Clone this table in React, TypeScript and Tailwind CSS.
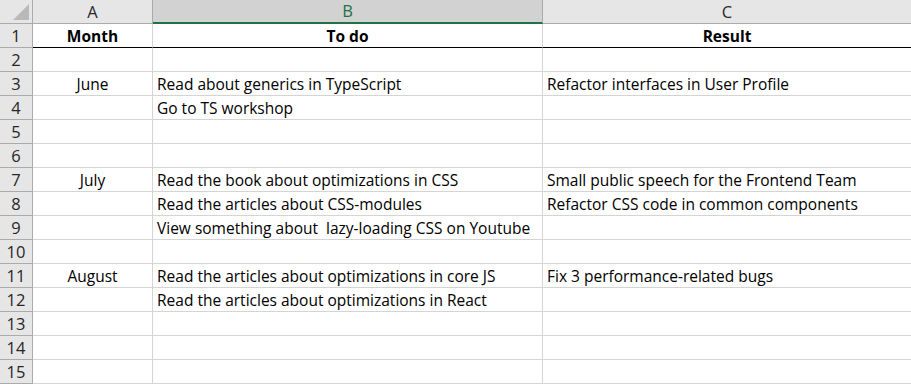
const rows: [string, string, string][] = [
  ['Month', 'To do', 'Result'],
  ['', '', ''],
  ['June', 'Read about generics in TypeScript', 'Refactor interfaces in User Profile'],
  ['', 'Go to TS workshop', ''],
  ['', '', ''],
  ['', '', ''],
  ['July', 'Read the book about optimizations in CSS', 'Small public speech for the Frontend Team'],
  ['', 'Read the articles about CSS-modules', 'Refactor CSS code in common components'],
  ['', 'View something about  lazy-loading CSS on Youtube', ''],
  ['', '', ''],
  ['August', 'Read the articles about optimizations in core JS', 'Fix 3 performance-related bugs'],
  ['', 'Read the articles about optimizations in React', ''],
  ['', '', ''],
  ['', '', ''],
  ['', '', ''],
];

const font = { fontFamily: '"Open Sans", "Liberation Sans", sans-serif' };

export default function App() {
  return (
    <div className="w-[911px] h-[384px] overflow-hidden bg-white text-[#000]" style={font}>
      <div className="grid grid-cols-[33px_120px_390px_1fr]">
        {/* column headers */}
        <div className="h-[24px] bg-[#e6e6e6] border-r border-b border-[#ababab] relative">
          <div className="absolute left-[13px] top-[4px] w-0 h-0 border-l-[16px] border-l-transparent border-b-[16px] border-b-[#b9b9b9]" />
        </div>
        <div className="h-[24px] pt-[1px] bg-[#e6e6e6] border-r border-b border-[#ababab] flex items-center justify-center text-[16.5px] text-[#262626]">
          A
        </div>
        <div className="h-[24px] pt-[1px] bg-[#d2d2d2] border-r border-[#ababab] border-b-2 border-b-[#217346] flex items-center justify-center text-[16.5px] text-[#217346]">
          B
        </div>
        <div className="h-[24px] pt-[1px] bg-[#e6e6e6] border-b border-[#ababab] flex items-center justify-center text-[16.5px] text-[#262626]">
          C
        </div>

        {rows.map((r, i) => {
          const first = i === 0;
          const cell = first
            ? 'h-[24px] pt-[2px] border-r border-[#d4d4d4] border-b border-b-black flex items-center justify-center font-bold text-[15.5px]'
            : 'h-[24px] pt-[2px] border-r border-b border-[#d4d4d4] flex items-center text-[15.5px] whitespace-nowrap overflow-hidden';
          return [
            <div
              key={`h${i}`}
              className="h-[24px] pt-[1px] bg-[#e6e6e6] border-r border-b border-[#ababab] flex items-center justify-center text-[16.5px] text-[#262626]"
            >
              {i + 1}
            </div>,
            <div key={`a${i}`} className={first ? cell : cell + ' justify-center'}>
              {r[0]}
            </div>,
            <div key={`b${i}`} className={first ? cell : cell + ' pl-[4px]'}>
              <span className="whitespace-pre">{r[1]}</span>
            </div>,
            <div key={`c${i}`} className={first ? cell + ' border-r-0' : cell + ' pl-[4px] border-r-0'}>
              {r[2]}
            </div>,
          ];
        })}
      </div>
    </div>
  );
}
